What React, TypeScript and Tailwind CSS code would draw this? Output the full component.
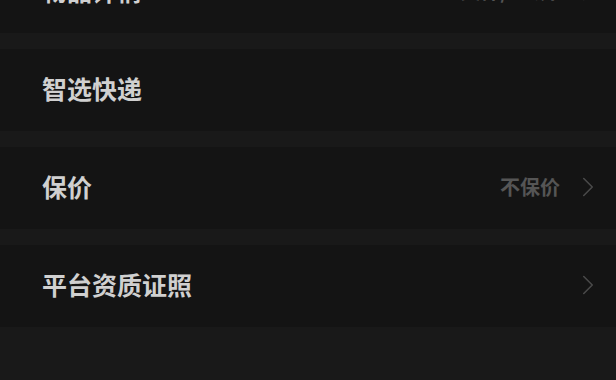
import { ChevronRight } from 'lucide-react';

type Row = { label: string; value?: string; arrow?: boolean };

const rows: Row[] = [
  { label: '物品详情', value: '文件/1公斤', arrow: true },
  { label: '智选快递' },
  { label: '保价', value: '不保价', arrow: true },
  { label: '平台资质证照', arrow: true },
];

const App = () => {
  return (
    <div
      className="h-[380px] w-[616px] overflow-hidden bg-[#191919]"
      style={{ fontFamily: '"Noto Sans CJK SC", "Noto Sans", sans-serif' }}
    >
      <div className="-mt-[49px] flex flex-col gap-[16px]">
        {rows.map((row) => (
          <div
            key={row.label}
            className="flex h-[82px] items-center justify-between bg-[#141414] pb-[3px] pl-[42px] pr-[11px]"
          >
            <span className="text-[25px] font-bold leading-none text-[#d0d0d0]">{row.label}</span>
            <div className="flex items-center gap-[11px]">
              {row.value && (
                <span className="text-[20px] font-bold leading-none text-[#555555]">{row.value}</span>
              )}
              {row.arrow && <ChevronRight className="h-[34px] w-[34px] text-[#4a4a4a]" strokeWidth={1.1} />}
            </div>
          </div>
        ))}
      </div>
    </div>
  );
};

export default App;
